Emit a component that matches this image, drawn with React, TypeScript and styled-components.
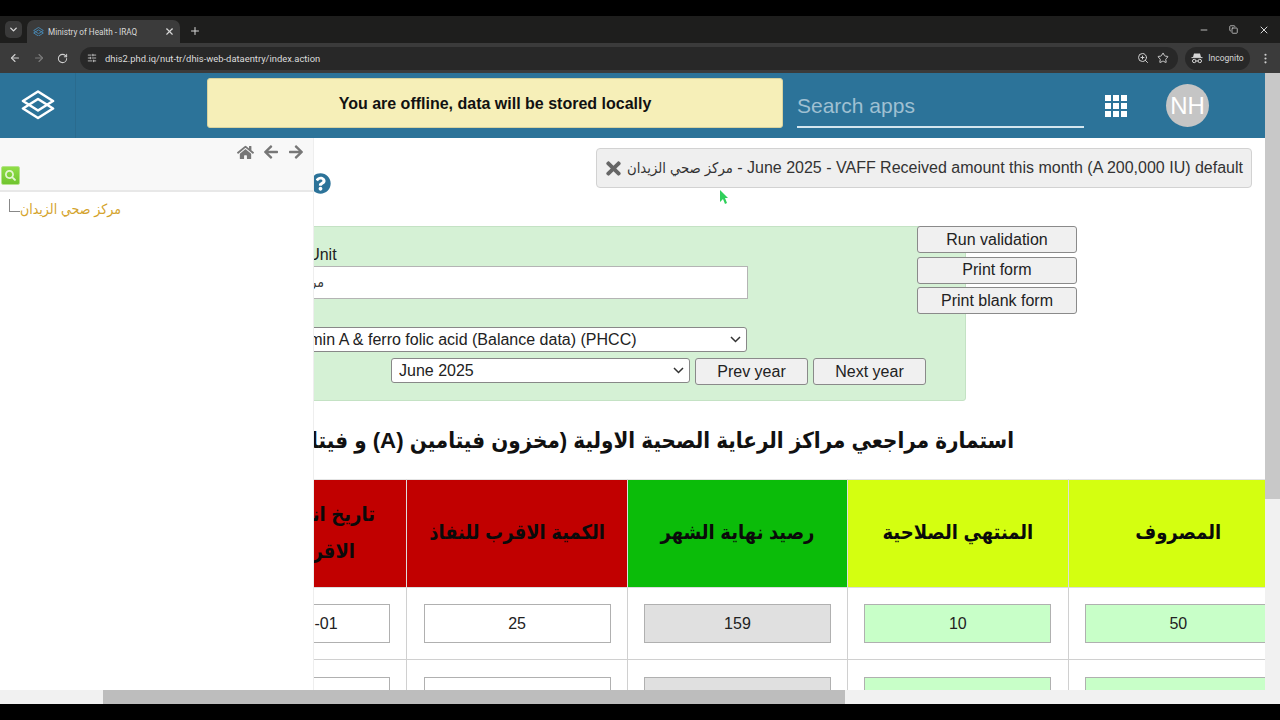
import styled, { createGlobalStyle } from "styled-components";
import {
  ArrowLeft,
  ArrowRight,
  ChevronDown,
  Copy,
  Minus,
  MoreVertical,
  Plus,
  RotateCw,
  SlidersHorizontal,
  Star,
  X,
  ZoomIn,
} from "lucide-react";
import {
  FaArrowLeft,
  FaArrowRight,
  FaHome,
  FaQuestionCircle,
  FaSearch,
  FaTimes,
} from "react-icons/fa";

const ORG_UNIT = "مركز صحي الزيدان";
const SANS = `"Liberation Sans", "DejaVu Sans Condensed", "DejaVu Sans", sans-serif`;
const CHEVRON = `url("data:image/svg+xml,%3Csvg xmlns='http://www.w3.org/2000/svg' width='11' height='7' viewBox='0 0 11 7'%3E%3Cpath d='M1 1l4.5 4.5L10 1' fill='none' stroke='%23333' stroke-width='1.5'/%3E%3C/svg%3E")`;

const GlobalStyle = createGlobalStyle`
  html, body {
    margin: 0;
    height: 100%;
    overflow: hidden;
    background: #000;
    font-family: ${SANS};
  }
`;

const Shell = styled.div`
  width: 1280px;
  height: 720px;
  display: flex;
  flex-direction: column;
  overflow: hidden;
`;

const BlackBar = styled.div<{ $h: number }>`
  height: ${(p) => p.$h}px;
  flex: none;
  background: #000;
`;

const TabStrip = styled.div`
  height: 27px;
  flex: none;
  display: flex;
  align-items: flex-end;
  background: #1e1e1d;
  color: #d8d8d8;
  padding-left: 5px;
`;

const TabListButton = styled.div`
  width: 17px;
  height: 17px;
  margin-bottom: 5px;
  border-radius: 5px;
  background: #3a3a3a;
  display: flex;
  align-items: center;
  justify-content: center;
`;

const Tab = styled.div`
  width: 153px;
  height: 23px;
  margin-left: 5px;
  box-sizing: border-box;
  padding: 0 5px 0 6px;
  background: #3b3b3b;
  border-radius: 7px 7px 0 0;
  display: flex;
  align-items: center;
  gap: 4px;
  font: 8.2px Roboto, sans-serif;
`;

const TabTitle = styled.span`
  flex: 1;
  white-space: nowrap;
`;

const NewTab = styled.div`
  margin: 0 0 4px 9px;
  height: 16px;
  display: flex;
  align-items: center;
`;

const WindowButtons = styled.div`
  margin-left: auto;
  height: 100%;
  display: flex;
  align-items: center;
  gap: 20px;
  padding-right: 10px;
`;

const Toolbar = styled.div`
  height: 30px;
  flex: none;
  box-sizing: border-box;
  display: flex;
  align-items: center;
  background: #3b3b3b;
  color: #cfcfcf;
  padding: 0 8px 0 9px;
`;

const NavIcons = styled.div`
  width: 71px;
  display: flex;
  gap: 12px;
  align-items: center;
`;

const Omnibox = styled.div`
  width: 1098px;
  height: 23px;
  box-sizing: border-box;
  border-radius: 12px;
  background: #282828;
  display: flex;
  align-items: center;
  padding: 0 9px 0 7px;
  gap: 8px;
`;

const Url = styled.span`
  flex: 1;
  font: 9.4px Roboto, sans-serif;
  color: #dcdcdc;
  white-space: nowrap;
`;

const Incognito = styled.div`
  width: 65px;
  height: 23px;
  margin-left: 7px;
  border-radius: 12px;
  background: #282828;
  display: flex;
  align-items: center;
  justify-content: center;
  gap: 5px;
  font: 8.5px Roboto, sans-serif;
  color: #d6d6d6;
`;

const MenuDots = styled.div`
  margin-left: auto;
  display: flex;
`;

const Viewport = styled.div`
  flex: 1;
  min-height: 0;
  display: flex;
`;

const PageColumn = styled.div`
  width: 1265px;
  display: flex;
  flex-direction: column;
  background: #fff;
`;

const Header = styled.header`
  height: 65px;
  flex: none;
  display: flex;
  background: #2c7399;
`;

const LogoCell = styled.div`
  width: 76px;
  flex: none;
  box-sizing: border-box;
  border-right: 1px solid #2a6b8e;
  display: flex;
  align-items: center;
  justify-content: center;
  padding-bottom: 2px;
`;

const OfflineBanner = styled.div`
  width: 576px;
  height: 50px;
  margin: 5px 0 0 131px;
  box-sizing: border-box;
  background: #f6efb8;
  border: 1px solid #d9d39e;
  border-radius: 3px;
  padding-top: 2px;
  display: flex;
  align-items: center;
  justify-content: center;
  font-size: 16px;
  font-weight: 700;
  color: #111;
`;

const SearchApps = styled.div`
  width: 287px;
  height: 38px;
  margin: 17px 0 0 14px;
  box-sizing: border-box;
  border-bottom: 2px solid #d4e6ef;
  padding-top: 4px;
  font-size: 21px;
  color: #9fc0d2;
`;

const AppsGrid = styled.div`
  width: 22px;
  height: 22px;
  margin: 22px 0 0 21px;
  display: grid;
  grid-template-columns: repeat(3, 6px);
  grid-auto-rows: 6px;
  gap: 2px;
`;

const AppsDot = styled.span`
  background: #fff;
`;

const Avatar = styled.div`
  width: 43px;
  height: 43px;
  margin: 11px 0 0 39px;
  border-radius: 50%;
  background: #c5c5c5;
  color: #fff;
  font-size: 24px;
  display: flex;
  align-items: center;
  justify-content: center;
`;

const Body = styled.div`
  flex: 1;
  min-height: 0;
  display: flex;
  position: relative;
`;

const Sidebar = styled.aside`
  width: 314px;
  flex: none;
  box-sizing: border-box;
  border-right: 1px solid #eee;
  background: #fff;
  position: relative;
  z-index: 1;
`;

const SidebarTools = styled.div`
  height: 54px;
  box-sizing: border-box;
  background: #f8f8f8;
  border-bottom: 2px solid #e8e8e8;
  padding: 6px 0 0 1px;
`;

const SidebarNav = styled.div`
  height: 20px;
  display: flex;
  justify-content: flex-end;
  gap: 9px;
  padding-right: 9px;
  color: #777;
`;

const SearchButton = styled.div`
  width: 19px;
  height: 19px;
  margin-top: 2px;
  border-radius: 2px;
  background: linear-gradient(#90de48, #70c42e);
  border: 1px solid #b5e48c;
  box-sizing: border-box;
  color: #e4f6d2;
  display: flex;
  align-items: center;
  justify-content: center;
`;

const TreeRow = styled.div`
  display: flex;
  align-items: flex-end;
  padding: 7px 0 0 9px;
`;

const TreeLine = styled.span`
  width: 11px;
  height: 13px;
  margin-bottom: 6px;
  box-sizing: border-box;
  border-left: 1px solid #888;
  border-bottom: 1px solid #888;
`;

const TreeLabel = styled.span`
  font-size: 14px;
  line-height: 18px;
  color: #d4a32c;
  white-space: nowrap;
`;

const Main = styled.main`
  flex: 1;
  min-width: 0;
  overflow: hidden;
`;

const Scrolled = styled.div`
  width: 1300px;
  margin-left: -128px;
  padding-top: 35px;
`;

const HelpLink = styled.div`
  height: 21px;
  padding-left: 124px;
  color: #2c7399;
`;

const FormRow = styled.div`
  display: flex;
  align-items: flex-start;
  margin-top: 32px;
`;

const FormPanel = styled.div`
  width: 770px;
  height: 175px;
  margin-left: 10px;
  box-sizing: border-box;
  padding: 19px 39px 0 19px;
  background: #d5f1d5;
  border: 1px solid #c4e2c4;
  border-radius: 3px;
  display: flex;
  flex-direction: column;
`;

const FieldLabel = styled.label`
  margin-left: -3px;
  font-size: 16px;
  line-height: 18px;
  color: #222;
  white-space: nowrap;
`;

const OrgInput = styled.div`
  width: 532px;
  height: 33px;
  margin-top: 2px;
  box-sizing: border-box;
  border: 1px solid #b4b4b4;
  background: #fff;
  padding-left: 6px;
  font-size: 14px;
  line-height: 30px;
  color: #333;
  white-space: nowrap;
`;

const FormSelect = styled.select<{ $w: number }>`
  width: ${(p) => p.$w}px;
  height: 25px;
  box-sizing: border-box;
  padding: 0 24px 0 7px;
  appearance: none;
  background: #fff ${CHEVRON} no-repeat right 5px center;
  font: 16px ${SANS};
  color: #222;
  border: 1px solid #888;
  border-radius: 3px;
`;

const DataSetSelect = styled(FormSelect)`
  margin: 28px 0 0 58px;
`;

const PeriodRow = styled.div`
  display: flex;
  justify-content: flex-end;
  gap: 5px;
  margin-top: 6px;
`;

const FormButton = styled.button<{ $w: number }>`
  width: ${(p) => p.$w}px;
  height: 27px;
  padding: 0;
  box-sizing: border-box;
  background: #f0f0f0;
  border: 1px solid #8a8a8a;
  border-radius: 3px;
  font: 16px ${SANS};
  color: #222;
`;

const ActionColumn = styled.div`
  margin-left: -49px;
  display: flex;
  flex-direction: column;
  gap: 3.7px;
`;

const FormTitle = styled.h2`
  width: 828px;
  height: 30px;
  margin: 25px 0 23px;
  display: flex;
  justify-content: flex-start;
  direction: rtl;
  font-size: 22.2px;
  line-height: 30px;
  font-weight: 700;
  color: #111;
  white-space: nowrap;
`;

const FormTable = styled.table`
  width: 1103px;
  table-layout: fixed;
  border-collapse: collapse;
`;

const HeadCell = styled.th<{ $bg: string }>`
  height: 108px;
  padding: 0 12px 2px;
  box-sizing: border-box;
  background: ${(p) => p.$bg};
  border: 1px solid #ddd;
  border-top-color: #e4e4e4;
  direction: rtl;
  font-size: 20px;
  line-height: 37px;
  font-weight: 700;
  color: #0a0a0a;
  text-align: center;
`;

const BodyCell = styled.td<{ $h: number }>`
  height: ${(p) => p.$h}px;
  padding: 0;
  border: 1px solid #d0d0d0;
  text-align: center;
`;

const ValueBox = styled.div<{ $bg: string }>`
  width: 187px;
  height: 39px;
  margin: 0 auto;
  box-sizing: border-box;
  background: ${(p) => p.$bg};
  border: 1px solid #b0b0b0;
  font-size: 16px;
  line-height: 37px;
  color: #222;
`;

const Toast = styled.div`
  position: absolute;
  left: 596px;
  top: 10px;
  width: 656px;
  height: 40px;
  box-sizing: border-box;
  background: #efefef;
  border: 1px solid #d2d2d2;
  border-radius: 4px;
  z-index: 2;
  display: flex;
  align-items: center;
  justify-content: space-between;
  padding: 0 8px 0 6px;
  color: #666;
`;

const ToastText = styled.span`
  font-size: 16px;
  color: #333;
  white-space: nowrap;
`;

const ToastArabic = styled.span`
  font-size: 14.7px;
`;

const Cursor = styled.svg`
  position: absolute;
  left: 720px;
  top: 52px;
  z-index: 3;
`;

const HScrollbar = styled.div`
  height: 14px;
  flex: none;
  background: #f1f1f1;
  padding-left: 103px;
`;

const HThumb = styled.div`
  width: 742px;
  height: 100%;
  background: #bdbdbd;
`;

const VScrollbar = styled.div`
  width: 15px;
  flex: none;
  background: #f1f1f1;
`;

const VThumb = styled.div`
  height: 426px;
  background: #c8c8c8;
`;

const Logo = ({ size, color }: { size: number; color: string }) => (
  <svg width={size} height={(size * 30) / 34} viewBox="0 0 34 30" fill="none">
    <path
      d="M17 1.5 32 11 17 20.5 2 11Z M17 9 32 18.5 17 28 2 18.5Z"
      stroke={color}
      strokeWidth="2.6"
      strokeLinejoin="round"
    />
  </svg>
);

const IncognitoIcon = () => (
  <svg width="12" height="12" viewBox="0 0 12 12" fill="none" stroke="#d6d6d6">
    <path d="M3 1.5h6l1 3.5H2Z" fill="#d6d6d6" stroke="none" />
    <path d="M.5 5.6h11" strokeWidth="1" />
    <circle cx="3.2" cy="9" r="1.7" strokeWidth="1" />
    <circle cx="8.8" cy="9" r="1.7" strokeWidth="1" />
    <path d="M5 9h2" strokeWidth="1" />
  </svg>
);

const headers = [
  { label: "تاريخ انتهاء الكمية الاقرب للنفاذ", bg: "#c10000" },
  { label: "الكمية الاقرب للنفاذ", bg: "#c10000" },
  { label: "رصيد نهاية الشهر", bg: "#0bbc09" },
  { label: "المنتهي الصلاحية", bg: "#d4ff10" },
  { label: "المصروف", bg: "#d4ff10" },
];

const rows = [
  { h: 71, values: ["2026-01-01", "25", "159", "10", "50"] },
  { h: 72, values: ["", "", "", "", ""] },
];

const cellColors = ["#fff", "#fff", "#e0e0e0", "#c8ffc8", "#c8ffc8"];

export default function App() {
  return (
    <>
      <GlobalStyle />
      <Shell>
        <BlackBar $h={16} />
        <TabStrip>
          <TabListButton>
            <ChevronDown size={11} strokeWidth={3} />
          </TabListButton>
          <Tab>
            <Logo size={11} color="#4a90c0" />
            <TabTitle>Ministry of Health - IRAQ</TabTitle>
            <X size={11} strokeWidth={2.5} />
          </Tab>
          <NewTab>
            <Plus size={12} strokeWidth={2} />
          </NewTab>
          <WindowButtons>
            <Minus size={10} />
            <Copy size={9} />
            <X size={12} />
          </WindowButtons>
        </TabStrip>
        <Toolbar>
          <NavIcons>
            <ArrowLeft size={12} strokeWidth={2.2} />
            <ArrowRight size={12} strokeWidth={2.2} color="#7c7c7c" />
            <RotateCw size={11} strokeWidth={2.2} />
          </NavIcons>
          <Omnibox>
            <SlidersHorizontal size={10} />
            <Url>dhis2.phd.iq/nut-tr/dhis-web-dataentry/index.action</Url>
            <ZoomIn size={12} />
            <Star size={12} />
          </Omnibox>
          <Incognito>
            <IncognitoIcon />
            Incognito
          </Incognito>
          <MenuDots>
            <MoreVertical size={13} />
          </MenuDots>
        </Toolbar>
        <Viewport>
          <PageColumn>
            <Header>
              <LogoCell>
                <Logo size={34} color="#fff" />
              </LogoCell>
              <OfflineBanner>You are offline, data will be stored locally</OfflineBanner>
              <SearchApps>Search apps</SearchApps>
              <AppsGrid>
                {Array.from({ length: 9 }, (_, i) => (
                  <AppsDot key={i} />
                ))}
              </AppsGrid>
              <Avatar>NH</Avatar>
            </Header>
            <Body>
              <Sidebar>
                <SidebarTools>
                  <SidebarNav>
                    <FaHome size={17} />
                    <FaArrowLeft size={16} />
                    <FaArrowRight size={16} />
                  </SidebarNav>
                  <SearchButton>
                    <FaSearch size={11} />
                  </SearchButton>
                </SidebarTools>
                <TreeRow>
                  <TreeLine />
                  <TreeLabel>{ORG_UNIT}</TreeLabel>
                </TreeRow>
              </Sidebar>
              <Main>
                <Scrolled>
                  <HelpLink>
                    <FaQuestionCircle size={21} />
                  </HelpLink>
                  <FormRow>
                    <FormPanel>
                      <FieldLabel>Organisation Unit</FieldLabel>
                      <OrgInput>{ORG_UNIT}</OrgInput>
                      <DataSetSelect $w={473} defaultValue="ds">
                        <option value="ds">Vitamin A &amp; ferro folic acid (Balance data) (PHCC)</option>
                      </DataSetSelect>
                      <PeriodRow>
                        <FormSelect $w={299} defaultValue="jun">
                          <option value="jun">June 2025</option>
                        </FormSelect>
                        <FormButton $w={113}>Prev year</FormButton>
                        <FormButton $w={113}>Next year</FormButton>
                      </PeriodRow>
                    </FormPanel>
                    <ActionColumn>
                      <FormButton $w={160}>Run validation</FormButton>
                      <FormButton $w={160}>Print form</FormButton>
                      <FormButton $w={160}>Print blank form</FormButton>
                    </ActionColumn>
                  </FormRow>
                  <FormTitle>استمارة مراجعي مراكز الرعاية الصحية الاولية (مخزون فيتامين (A) و فيتامين</FormTitle>
                  <FormTable>
                    <thead>
                      <tr>
                        {headers.map((h) => (
                          <HeadCell key={h.label} $bg={h.bg}>
                            {h.label}
                          </HeadCell>
                        ))}
                      </tr>
                    </thead>
                    <tbody>
                      {rows.map((row, r) => (
                        <tr key={r}>
                          {row.values.map((v, c) => (
                            <BodyCell key={c} $h={row.h}>
                              <ValueBox $bg={cellColors[c]}>{v}</ValueBox>
                            </BodyCell>
                          ))}
                        </tr>
                      ))}
                    </tbody>
                  </FormTable>
                </Scrolled>
              </Main>
              <Toast>
                <FaTimes size={21} />
                <ToastText>
                  <ToastArabic>{ORG_UNIT}</ToastArabic> - June 2025 - VAFF Received amount this month (A 200,000 IU) default
                </ToastText>
              </Toast>
              <Cursor width="9" height="14" viewBox="0 0 9 14">
                <path d="M0 0 8 8H5l2 5-2 1-2-5-3 3Z" fill="#2fd05a" />
              </Cursor>
            </Body>
            <HScrollbar>
              <HThumb />
            </HScrollbar>
          </PageColumn>
          <VScrollbar>
            <VThumb />
          </VScrollbar>
        </Viewport>
        <BlackBar $h={16} />
      </Shell>
    </>
  );
}
